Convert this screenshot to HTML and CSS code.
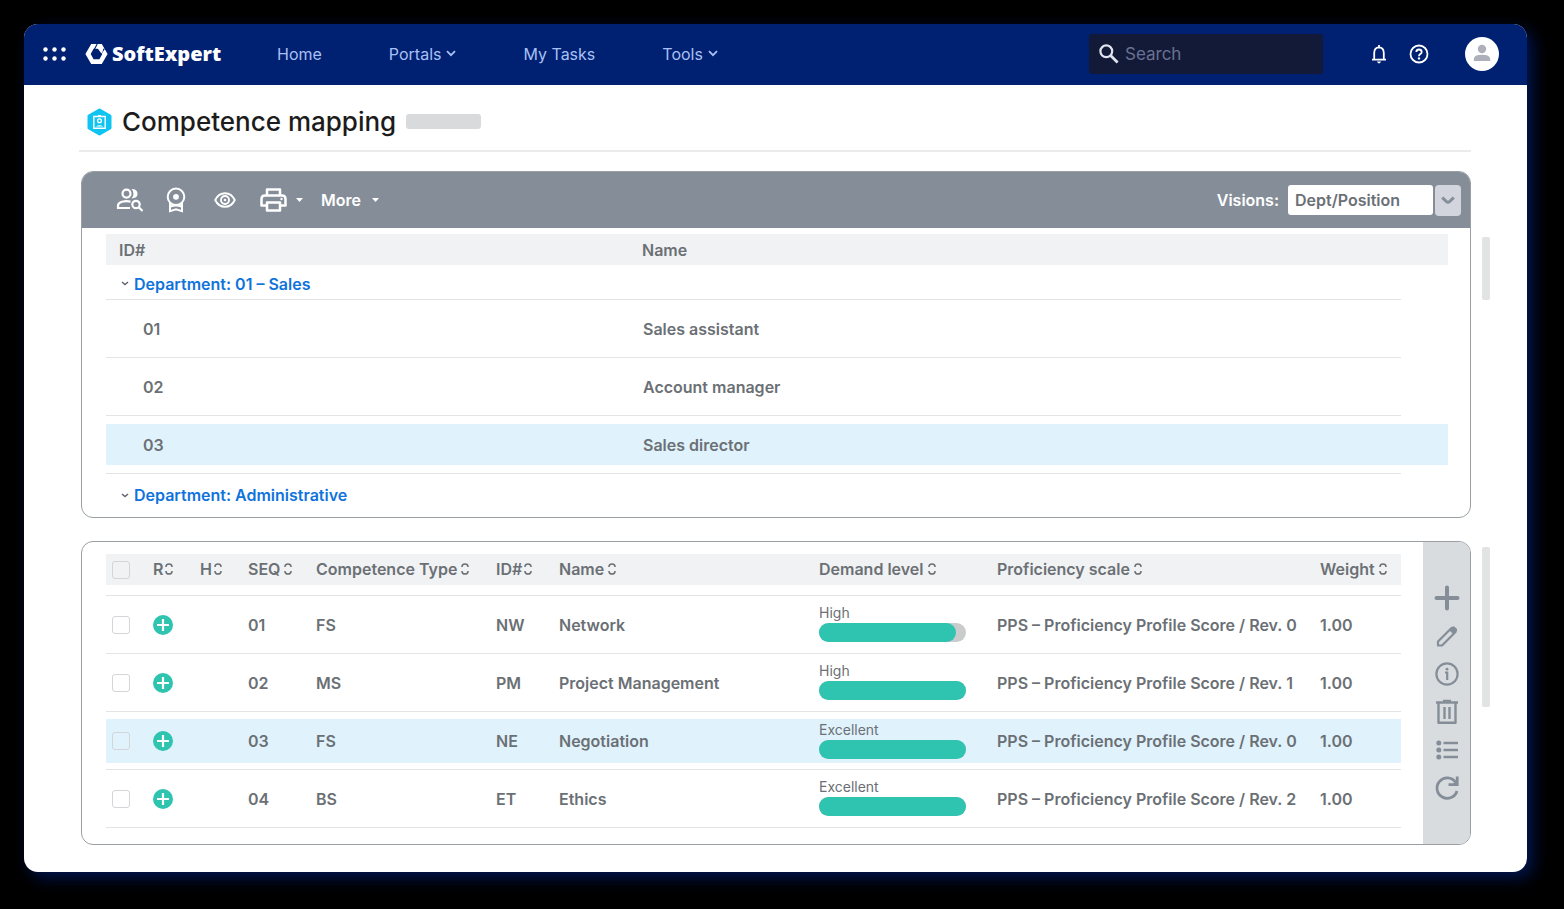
FILE: index.html
```html
<!DOCTYPE html>
<html lang="en">
<head>
    <meta charset="UTF-8">
    <meta name="viewport" content="width=device-width, initial-scale=1.0">
    <title>Competence mapping</title>
    <link rel="stylesheet" href="styles.css">
</head>
<body>

<!-- Shared icons -->
<svg class="sprite" aria-hidden="true">
    <symbol id="sort" viewBox="0 0 8 12">
        <path d="M1 4V3.4Q1.2 1 4 1T7 3.4V4M1 8v.6Q1.2 11 4 11T7 8.600V8" fill="none" stroke="currentColor" stroke-width="1.500"/>
    </symbol>
    <symbol id="chevron" viewBox="0 0 10 7">
        <path d="M1 1.200l4 4 4-4" fill="none" stroke="currentColor" stroke-width="1.800"/>
    </symbol>
    <symbol id="plus-circle" viewBox="0 0 20 20">
        <circle cx="10" cy="10" r="10" fill="#2ec4b0"/>
        <path d="M10 4v12M4 10h12" stroke="#fff" stroke-width="2.200"/>
    </symbol>
</svg>

<div class="window">
    <header class="topbar">
        <button class="icon-btn apps" aria-label="Applications">
            <svg width="24" height="14" viewBox="0 0 24 14" fill="#fff">
                <circle cx="2.500" cy="2.500" r="2.200"/><circle cx="11.500" cy="2.500" r="2.200"/><circle cx="20.500" cy="2.500" r="2.200"/>
                <circle cx="2.500" cy="11.500" r="2.200"/><circle cx="11.500" cy="11.500" r="2.200"/><circle cx="20.500" cy="11.500" r="2.200"/>
            </svg>
        </button>
        <a class="logo" href="#">
            <svg width="23" height="20" viewBox="0 0 23 20">
                <path fill="#fff" fill-rule="evenodd" d="M6.200 0h10.600L22.600 10l-5.800 10H6.200L.4 10zM8.600 4.800L5.700 10l2.900 5.200h5.800L17.300 10 14.400 4.800z"/>
                <path d="M12.200 0L9.400 5.200M19.400 4.600L15.900 9.600" stroke="#002072" stroke-width="1.100"/>
                <path fill="#fff" d="M12 3.500h4l2 3.300-1.600 2.600z"/>
            </svg>
            <span>SoftExpert</span>
        </a>
        <nav class="nav">
            <a href="#">Home</a>
            <button>Portals <svg width="10" height="7"><use href="#chevron"/></svg></button>
            <a href="#">My Tasks</a>
            <button>Tools <svg width="10" height="7"><use href="#chevron"/></svg></button>
        </nav>
        <label class="search">
            <svg width="20" height="20" viewBox="0 0 20 20" fill="none" stroke="#dfe3ee">
                <circle cx="7.300" cy="7.300" r="5.900" stroke-width="2.200"/>
                <path d="M11.600 11.600l7 7" stroke-width="2.800"/>
            </svg>
            <input type="text" placeholder="Search" aria-label="Search">
        </label>
        <button class="icon-btn bell" aria-label="Notifications">
            <svg width="16" height="20" viewBox="0 0 16 20" fill="none" stroke="#fff" stroke-width="1.800">
                <path d="M3.200 15.500V9q0-5.400 4.800-5.600Q12.800 3.600 12.800 9v6.500M1 15.700h14"/>
                <path d="M8 1v2.500"/>
                <path d="M6 17.600h4q-.4 1.800-2 1.800t-2-1.800z" fill="#fff" stroke="none"/>
            </svg>
        </button>
        <button class="icon-btn help" aria-label="Help">
            <svg width="20" height="20" viewBox="0 0 20 20" fill="none" stroke="#fff" stroke-width="1.800">
                <circle cx="10" cy="10" r="8.500"/>
                <path d="M7.300 8q.2-2.500 2.700-2.500T12.700 8q0 1.200-1.400 2.100Q10 11 10 12.200"/>
                <circle cx="10" cy="14.400" r="1.200" fill="#fff" stroke="none"/>
            </svg>
        </button>
        <button class="icon-btn avatar" aria-label="Profile">
            <svg width="34" height="34" viewBox="0 0 34 34">
                <circle cx="17" cy="17" r="17" fill="#fff"/>
                <circle cx="17" cy="12" r="4.200" fill="#adb0ba"/>
                <path d="M8.800 24v-2q0-4.300 8.200-4.300t8.200 4.300v2z" fill="#adb0ba"/>
            </svg>
        </button>
    </header>

    <main class="content">
        <div class="page-title">
            <svg width="25" height="28" viewBox="0 0 25 28">
                <path d="M12.500 2L23 8v12l-10.500 6L2 20V8z" fill="#10c4f2" stroke="#10c4f2" stroke-width="3" stroke-linejoin="round"/>
                <path d="M6.800 8.500h11.400v11.800H6.800z" fill="none" stroke="#fff" stroke-width="1.400"/>
                <circle cx="12.500" cy="12.800" r="1.900" fill="none" stroke="#fff" stroke-width="1.300"/>
                <path d="M8.800 18.600q3.700-2.600 7.400 0z" fill="#fff"/>
                <path d="M11 7h3v2h-3z" fill="#fff"/>
            </svg>
            <h1>Competence mapping</h1>
            <span class="placeholder"></span>
        </div>

        <div class="row">
            <section class="panel">
                <div class="toolbar">
                    <button class="icon-btn tool-users" aria-label="Search users">
                        <svg width="28" height="24" viewBox="0 0 28 24" fill="none" stroke="#fff" stroke-width="2.200">
                            <circle cx="10.500" cy="5.600" r="4"/>
                            <path d="M14 20H2v-2.500q0-2.500 4-3.700 4-1.100 8.500-.2"/>
                            <path d="M15.500 1q6 .1 6 4.700t-6 4.700q2-2 2-4.700t-2-4.700z" fill="#fff" stroke="none"/>
                            <circle cx="20" cy="16.500" r="3.700"/>
                            <path d="M22.800 19.300l3.700 3.700"/>
                        </svg>
                    </button>
                    <button class="icon-btn tool-badge" aria-label="Certification">
                        <svg width="20" height="26" viewBox="0 0 20 26" fill="none" stroke="#fff" stroke-width="2">
                            <circle cx="10" cy="9.800" r="8.300"/>
                            <circle cx="10" cy="9.800" r="2.900" fill="#fff" stroke="none"/>
                            <path d="M4 16v8.200l6-2 6 2V16M4.500 19.500q5.500-2 11 0"/>
                        </svg>
                    </button>
                    <button class="icon-btn tool-view" aria-label="View">
                        <svg width="22" height="16" viewBox="0 0 22 16" fill="none" stroke="#fff" stroke-width="1.900">
                            <path d="M1.200 8Q4.500 1.200 11 1.200T20.800 8Q17.500 14.800 11 14.800T1.200 8z"/>
                            <circle cx="11" cy="8" r="4"/>
                            <circle cx="11" cy="8" r="1.300" fill="#fff" stroke="none"/>
                        </svg>
                    </button>
                    <button class="icon-btn tool-print" aria-label="Print">
                        <svg width="27" height="24" viewBox="0 0 27 24" fill="none" stroke="#fff" stroke-width="2.500" stroke-linejoin="round">
                            <path d="M7 7V1.500h13V7M6.500 17.500H1.500V11q0-3.500 3.500-3.500h17q3.500 0 3.500 3.500v6.500h-5"/>
                            <path d="M7 14.500h13v8H7z"/>
                            <circle cx="21.500" cy="11" r="1.200" fill="#fff" stroke="none"/>
                        </svg>
                        <svg width="7" height="4" viewBox="0 0 7 4"><path d="M0 0h7L3.500 4z" fill="#fff"/></svg>
                    </button>
                    <button class="more">More <svg width="7" height="4" viewBox="0 0 7 4"><path d="M0 0h7L3.500 4z" fill="#fff"/></svg></button>

                    <div class="visions">
                        <label for="visions">Visions:</label>
                        <select id="visions">
                            <option>Dept/Position</option>
                        </select>
                        <span class="select-arrow">
                            <svg width="14" height="9" viewBox="0 0 14 9"><path d="M1.200 1.500L5.500 5.600q1.500 1.200 3 0l4.300-4.100" fill="none" stroke="#858e98" stroke-width="3"/></svg>
                        </span>
                    </div>
                </div>

                <table class="positions">
                    <colgroup><col class="c-id"><col><col class="c-end"></colgroup>
                    <thead>
                        <tr><th>ID#</th><th>Name</th><th></th></tr>
                    </thead>
                    <tbody>
                        <tr class="group">
                            <td colspan="2"><button><svg width="8" height="5" viewBox="0 0 8 5"><path d="M1 1l3 2.500L7 1" fill="none" stroke="#5f666d" stroke-width="1.500"/></svg>Department: 01 – Sales</button></td>
                            <td></td>
                        </tr>
                        <tr><td>01</td><td>Sales assistant</td><td></td></tr>
                        <tr><td>02</td><td>Account manager</td><td></td></tr>
                        <tr class="selected"><td>03</td><td>Sales director</td><td></td></tr>
                        <tr class="group last">
                            <td colspan="2"><button><svg width="8" height="5" viewBox="0 0 8 5"><path d="M1 1l3 2.500L7 1" fill="none" stroke="#5f666d" stroke-width="1.500"/></svg>Department: Administrative</button></td>
                            <td></td>
                        </tr>
                    </tbody>
                </table>
            </section>
            <div class="scroll scroll-short"></div>
        </div>

        <div class="row">
            <section class="panel split">
                <table class="competences">
                    <colgroup>
                        <col class="w-check"><col class="w-r"><col class="w-h"><col class="w-seq"><col class="w-type">
                        <col class="w-id"><col><col class="w-demand"><col class="w-scale"><col class="w-weight">
                    </colgroup>
                    <thead>
                        <tr>
                            <th><input type="checkbox" aria-label="Select all"></th>
                            <th><button class="tight">R<svg width="8" height="12"><use href="#sort"/></svg></button></th>
                            <th><button class="tight">H<svg width="8" height="12"><use href="#sort"/></svg></button></th>
                            <th><button>SEQ<svg width="8" height="12"><use href="#sort"/></svg></button></th>
                            <th><button>Competence Type<svg width="8" height="12"><use href="#sort"/></svg></button></th>
                            <th><button class="tight">ID#<svg width="8" height="12"><use href="#sort"/></svg></button></th>
                            <th><button>Name<svg width="8" height="12"><use href="#sort"/></svg></button></th>
                            <th><button>Demand level<svg width="8" height="12"><use href="#sort"/></svg></button></th>
                            <th><button>Proficiency scale<svg width="8" height="12"><use href="#sort"/></svg></button></th>
                            <th><button>Weight<svg width="8" height="12"><use href="#sort"/></svg></button></th>
                        </tr>
                    </thead>
                    <tbody>
                        <tr>
                            <td><input type="checkbox" aria-label="Select 01"></td>
                            <td><svg class="plus" width="20" height="20"><use href="#plus-circle"/></svg></td>
                            <td></td>
                            <td>01</td>
                            <td>FS</td>
                            <td>NW</td>
                            <td>Network</td>
                            <td><div class="level">High<div class="bar"><div class="fill" style="width: 93%"></div></div></div></td>
                            <td>PPS – Proficiency Profile Score / Rev. 0</td>
                            <td>1.00</td>
                        </tr>
                        <tr>
                            <td><input type="checkbox" aria-label="Select 02"></td>
                            <td><svg class="plus" width="20" height="20"><use href="#plus-circle"/></svg></td>
                            <td></td>
                            <td>02</td>
                            <td>MS</td>
                            <td>PM</td>
                            <td>Project Management</td>
                            <td><div class="level">High<div class="bar"><div class="fill" style="width: 100%"></div></div></div></td>
                            <td>PPS – Proficiency Profile Score / Rev. 1</td>
                            <td>1.00</td>
                        </tr>
                        <tr class="selected">
                            <td><input type="checkbox" aria-label="Select 03"></td>
                            <td><svg class="plus" width="20" height="20"><use href="#plus-circle"/></svg></td>
                            <td></td>
                            <td>03</td>
                            <td>FS</td>
                            <td>NE</td>
                            <td>Negotiation</td>
                            <td><div class="level">Excellent<div class="bar"><div class="fill" style="width: 100%"></div></div></div></td>
                            <td>PPS – Proficiency Profile Score / Rev. 0</td>
                            <td>1.00</td>
                        </tr>
                        <tr>
                            <td><input type="checkbox" aria-label="Select 04"></td>
                            <td><svg class="plus" width="20" height="20"><use href="#plus-circle"/></svg></td>
                            <td></td>
                            <td>04</td>
                            <td>BS</td>
                            <td>ET</td>
                            <td>Ethics</td>
                            <td><div class="level">Excellent<div class="bar"><div class="fill" style="width: 100%"></div></div></div></td>
                            <td>PPS – Proficiency Profile Score / Rev. 2</td>
                            <td>1.00</td>
                        </tr>
                    </tbody>
                </table>

                <div class="actions">
                    <button class="icon-btn" aria-label="Add">
                        <svg width="26" height="26" viewBox="0 0 26 26" fill="none" stroke="#858e98" stroke-width="4" stroke-linecap="round"><path d="M13 2.500v21M2.500 13h21"/></svg>
                    </button>
                    <button class="icon-btn" aria-label="Edit">
                        <svg width="26" height="26" viewBox="0 0 26 26" fill="none" stroke="#858e98" stroke-width="2.200" stroke-linejoin="round">
                            <path d="M4 22.500v-4L17.500 5l4 4L8 22.500z"/>
                            <path d="M15.500 7L18 4.500q1.500-1.500 3 0l1 1q1.500 1.500 0 3L19.500 11z" fill="#858e98" stroke-width="1"/>
                        </svg>
                    </button>
                    <button class="icon-btn" aria-label="Information">
                        <svg width="26" height="26" viewBox="0 0 26 26" fill="none" stroke="#858e98" stroke-width="2.200">
                            <circle cx="13" cy="13" r="10.600"/>
                            <path d="M11 11.500h2.200V19"/>
                            <circle cx="13" cy="8.200" r="1.400" fill="#858e98" stroke="none"/>
                        </svg>
                    </button>
                    <button class="icon-btn" aria-label="Delete">
                        <svg width="26" height="26" viewBox="0 0 26 26" fill="none" stroke="#858e98" stroke-width="2.400" stroke-linejoin="round">
                            <path d="M2 3.500h22M9 2h8M4.500 3.500v20.300h17V3.500M10.500 8v12M15.500 8v12"/>
                        </svg>
                    </button>
                    <button class="icon-btn" aria-label="List">
                        <svg width="26" height="26" viewBox="0 0 26 26" fill="#858e98" stroke="#858e98" stroke-width="2.400">
                            <path d="M9.500 6H24M9.500 13H24M9.500 20H24"/>
                            <circle cx="4.800" cy="6" r="1.300"/><circle cx="4.800" cy="13" r="1.300"/><circle cx="4.800" cy="20" r="1.300"/>
                        </svg>
                    </button>
                    <button class="icon-btn" aria-label="Refresh">
                        <svg width="26" height="26" viewBox="0 0 26 26" fill="none" stroke="#858e98" stroke-width="2.800">
                            <path d="M23 16A10.200 10.200 0 1 1 21.500 7.200"/>
                            <path d="M23.200 1.500V9.600H14.500"/>
                            <path d="M18.500 9.600l4.700-4.700v4.700z" fill="#858e98" stroke="none"/>
                        </svg>
                    </button>
                </div>
            </section>
            <div class="scroll scroll-long"></div>
        </div>
    </main>
</div>

</body>
</html>
```
FILE: styles.css
```css
* {
    box-sizing: border-box;
}

body {
    margin: 0;
    padding: 24px 37px 38px 24px;
    background-color: #000;
    font-family: Inter, "Liberation Sans", sans-serif;
    font-size: 16px;
    font-weight: 600;
    color: #6b7075;
}

button {
    display: inline-flex;
    align-items: center;
    padding: 0;
    border: none;
    background: none;
    font: inherit;
    color: inherit;
    cursor: pointer;
}

svg {
    display: block;
    flex: none;
}

.sprite {
    position: absolute;
    width: 0;
    height: 0;
}

.window {
    border-radius: 14px;
    background-color: #fff;
    overflow: hidden;
    box-shadow: 6px 6px 16px 0 #001550;
}

/* Top bar */
.topbar {
    display: flex;
    align-items: center;
    height: 61px;
    padding: 0 28px 2px 19px;
    background-color: #002072;
}

.logo {
    display: flex;
    align-items: center;
    gap: 4px;
    width: 135px;
    margin-left: 18px;
    font-family: "Open Sans", sans-serif;
    font-size: 20px;
    font-weight: 800;
    line-height: 24px;
    color: #fff;
    text-decoration: none;
}

.nav {
    display: flex;
    gap: 67px;
    margin-left: 57px;
    font-size: 16px;
    font-weight: 400;
    color: #a9c0f5;
}

.nav a {
    color: inherit;
    text-decoration: none;
}

.nav button {
    gap: 5px;
}

.search {
    display: flex;
    align-items: center;
    gap: 6px;
    width: 234px;
    height: 40px;
    margin-left: auto;
    padding: 0 10px;
    border-radius: 3px;
    background-color: #121a38;
}

.search input {
    width: 100%;
    padding: 0;
    border: none;
    outline: none;
    background: none;
    font: 400 17px Inter, sans-serif;
    color: #fff;
}

.search input::placeholder {
    color: #6a7191;
}

.bell {
    margin-left: 48px;
}

.help {
    margin-left: 22px;
}

.avatar {
    margin-left: 36px;
}

/* Page */
.content {
    padding: 0 37px 27px 57px;
}

.page-title {
    display: flex;
    align-items: center;
    gap: 10px;
    height: 67px;
    margin: 0 19px 19px -2px;
    padding: 8px 0 0 8px;
    border-bottom: 2px solid #ebebeb;
}

.page-title h1 {
    margin: 0;
    font-size: 26px;
    font-weight: 500;
    line-height: 32px;
    color: #1c1c1c;
}

.placeholder {
    width: 75px;
    height: 15px;
    border-radius: 3px;
    background-color: #d8dadc;
}

.row {
    display: flex;
    gap: 11px;
    margin-bottom: 23px;
}

.row:last-child {
    margin-bottom: 0;
}

.panel {
    flex: 1;
    border: 1px solid #9a9fa3;
    border-radius: 12px;
    overflow: hidden;
}

.scroll {
    width: 8px;
    border-radius: 2px;
    background-color: #e2e3e3;
}

.scroll-short {
    height: 63px;
    margin-top: 66px;
}

.scroll-long {
    height: 160px;
    margin-top: 6px;
}

/* Toolbar */
.toolbar {
    display: flex;
    align-items: center;
    height: 56px;
    padding: 0 9px 0 34px;
    background-color: #858e98;
    color: #fff;
}

.tool-badge {
    margin-left: 22px;
}

.tool-view {
    margin-left: 28px;
}

.tool-print {
    gap: 9px;
    margin-left: 24px;
}

.more {
    gap: 11px;
    margin-left: 18px;
}

.visions {
    display: flex;
    align-items: center;
    gap: 2px;
    margin-left: auto;
}

.visions label {
    margin-right: 7px;
}

.visions select {
    width: 145px;
    height: 30px;
    padding: 0 7px;
    border: none;
    border-radius: 3px;
    appearance: none;
    background-color: #fff;
    font: inherit;
    color: #6b7075;
}

.select-arrow {
    display: flex;
    align-items: center;
    justify-content: center;
    width: 26px;
    height: 31px;
    border-radius: 4px;
    background-color: #d2d5dd;
}

/* Tables */
table {
    border-collapse: separate;
    border-spacing: 0;
    table-layout: fixed;
}

th,
td {
    padding: 0;
    text-align: left;
    font-weight: 600;
    white-space: nowrap;
}

th {
    background-color: #f1f2f3;
}

td {
    height: 58px;
    border-bottom: 1px solid #e4e4e4;
}

.selected td {
    background-color: #e0f3fd;
    background-clip: content-box;
}

.positions {
    width: calc(100% - 46px);
    margin: 6px 22px 4px 24px;
}

.c-id {
    width: 536px;
}

.c-end {
    width: 47px;
}

.positions th {
    height: 31px;
}

.positions th:first-child {
    text-indent: 13px;
}

.positions td:first-child {
    text-indent: 37px;
}

.positions td:nth-child(2) {
    text-indent: 1px;
}

.positions td:last-child {
    border-bottom-color: transparent;
}

.positions .selected td {
    padding: 8px 0;
}

.positions .group td {
    height: 35px;
    text-indent: 0;
}

.positions .last td {
    height: 39px;
    border-bottom: none;
}

.group button {
    gap: 5px;
    margin-left: 15px;
    color: #0f73dc;
}

.split {
    display: flex;
}

.competences {
    flex: 1;
    margin: 12px 22px 16px 24px;
}

.w-check,
.w-r {
    width: 47px;
}

.w-h {
    width: 48px;
}

.w-seq {
    width: 68px;
}

.w-type {
    width: 180px;
}

.w-id {
    width: 63px;
}

.w-demand {
    width: 178px;
}

.w-scale {
    width: 323px;
}

.w-weight {
    width: 81px;
}

.competences th {
    height: 42px;
    padding-bottom: 10px;
    border-bottom: 1px solid #e4e4e4;
    background-clip: content-box;
}

.competences th button {
    gap: 4px;
    height: 31px;
    padding-bottom: 2px;
    vertical-align: top;
}

.competences th .tight {
    gap: 2px;
}

.competences .selected td {
    padding: 7px 0 6px;
}

input[type="checkbox"] {
    display: block;
    appearance: none;
    width: 18px;
    height: 18px;
    margin: 0 0 0 6px;
    border: 1px solid #d3d5d8;
    border-radius: 3px;
}

.level {
    width: 147px;
    padding-bottom: 3px;
    font-size: 14px;
    font-weight: 400;
    line-height: 17px;
}

.bar {
    height: 19px;
    margin-top: 2px;
    border-radius: 10px;
    background-color: #c9cbcc;
}

.fill {
    height: 100%;
    border-radius: 10px;
    background-color: #2ec4b0;
}

.actions {
    display: flex;
    flex-direction: column;
    align-items: center;
    justify-content: center;
    gap: 12px;
    width: 47px;
    background-color: #d8dcdf;
}
```
